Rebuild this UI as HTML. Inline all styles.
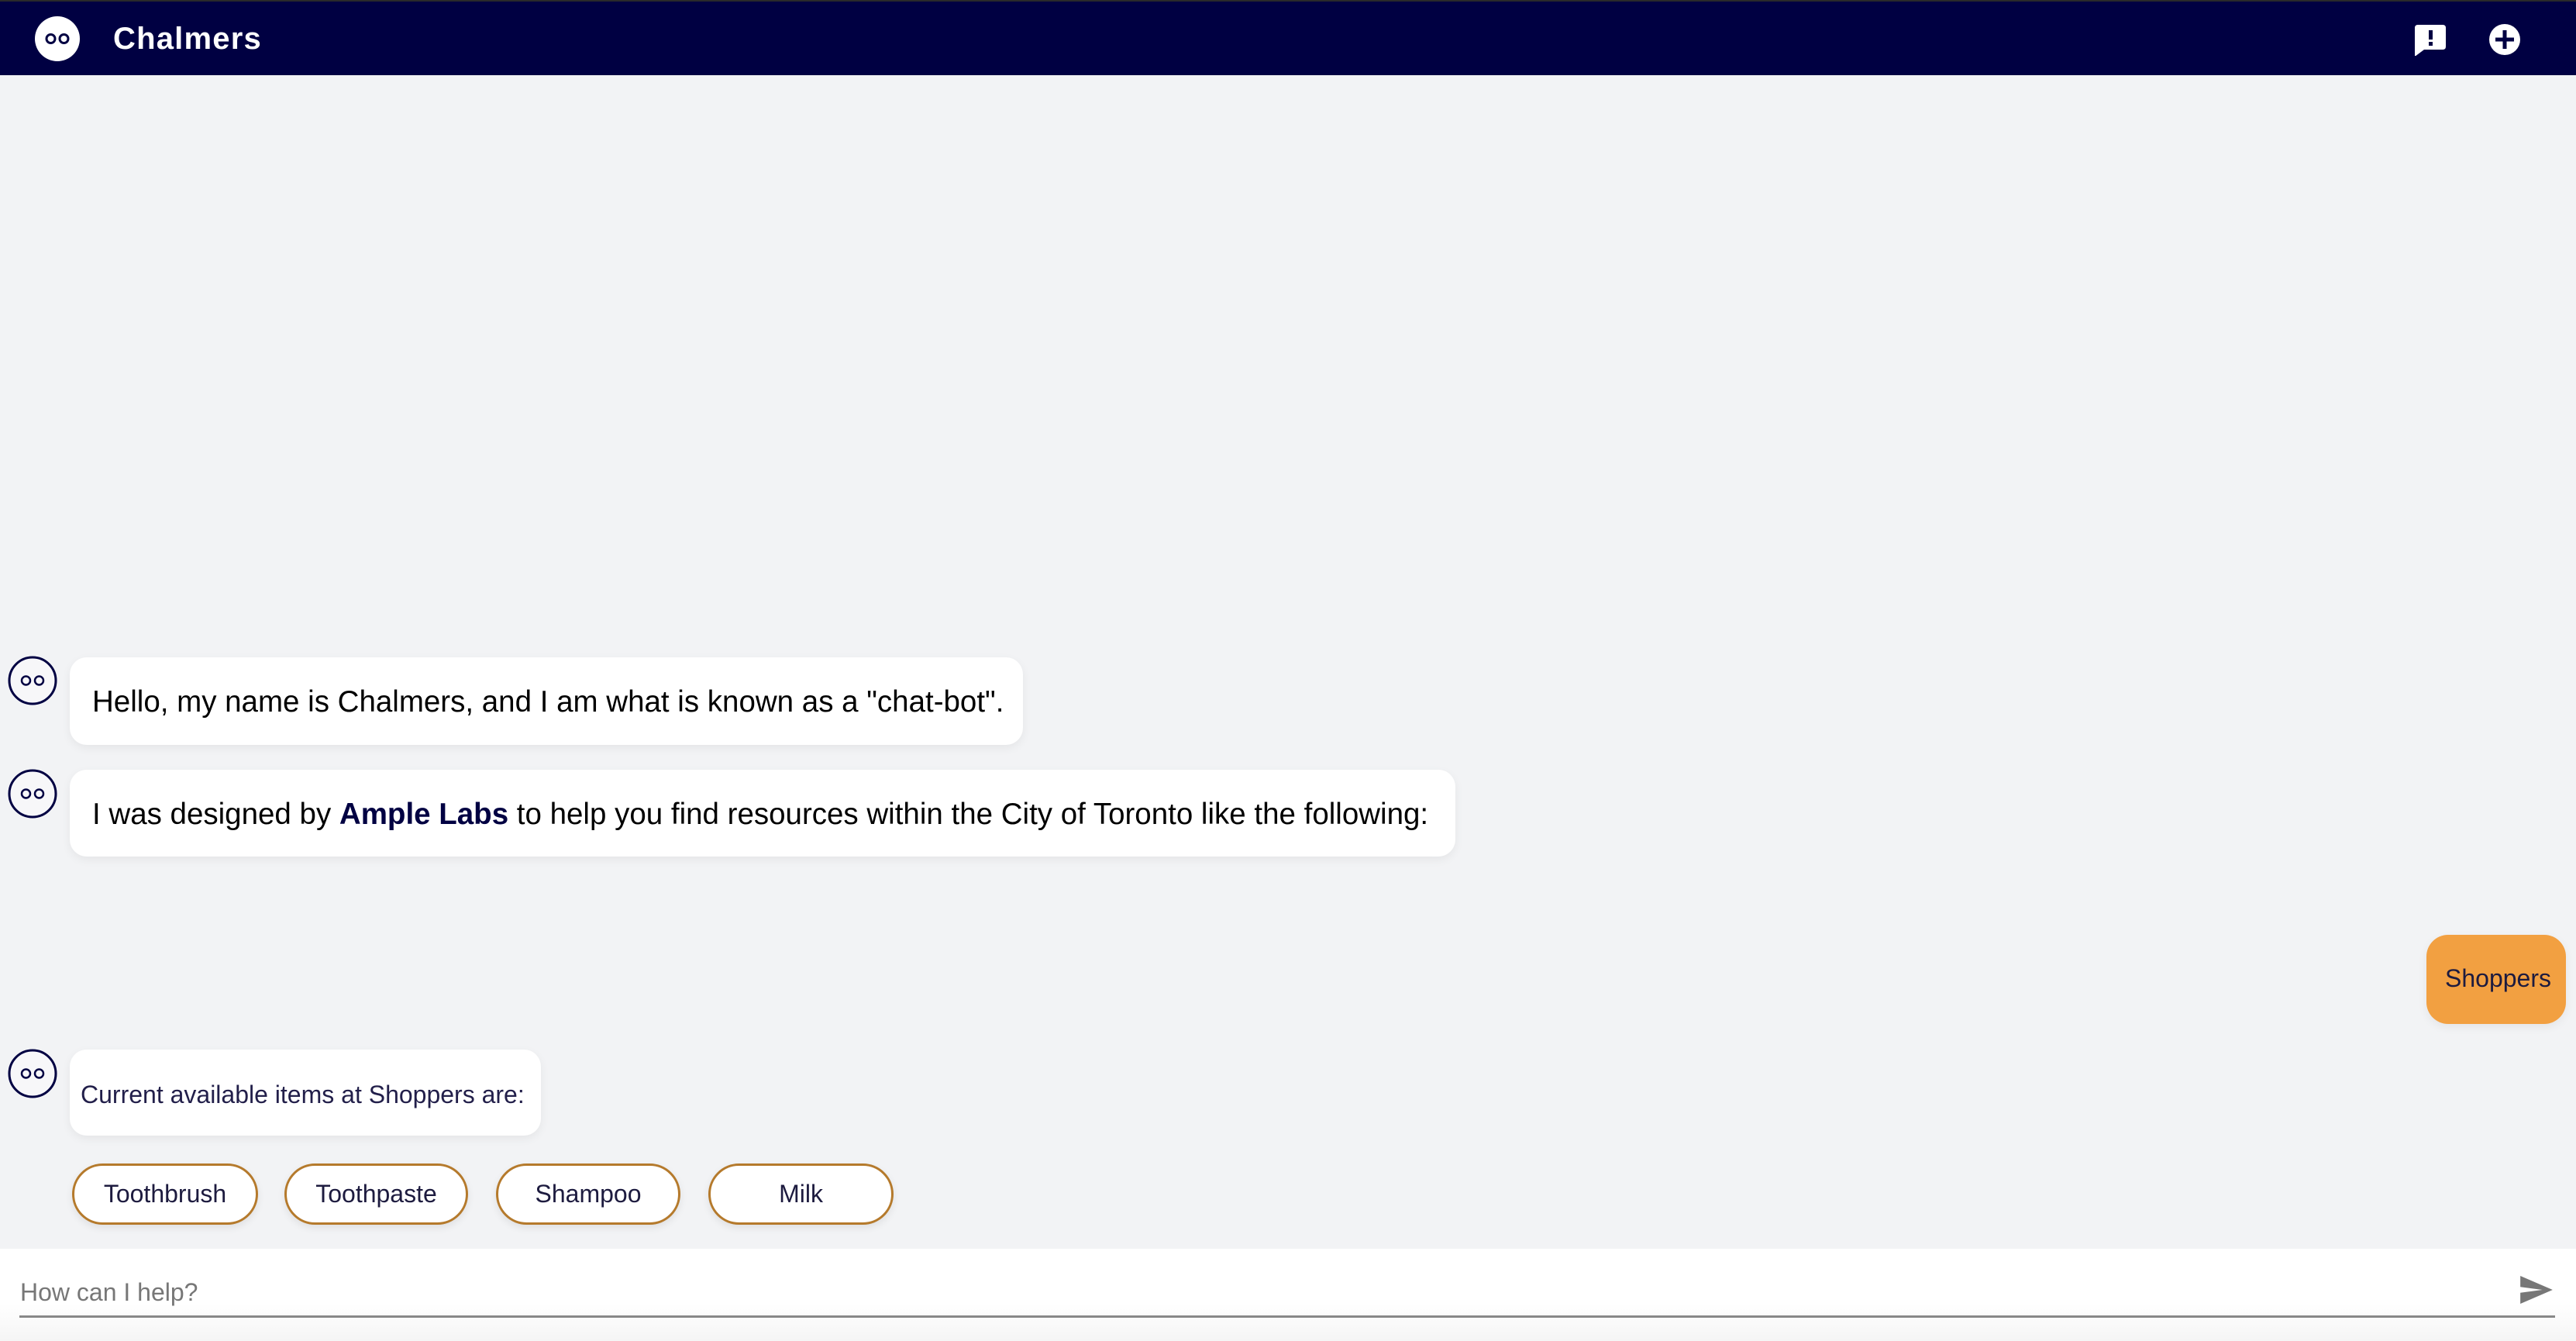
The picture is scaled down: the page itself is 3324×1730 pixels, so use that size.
<!DOCTYPE html>
<html><head><meta charset="utf-8"><style>
*{margin:0;padding:0;box-sizing:border-box}
body{width:3324px;height:1730px;background:#f2f3f5;position:relative;overflow:hidden;font-family:"Liberation Sans",sans-serif}
.hdr{position:absolute;left:0;top:0;width:3324px;height:97px;background:#000042;border-top:2px solid #2a2a2a}
.title{position:absolute;left:146px;top:26px;color:#fff;font-weight:bold;font-size:40px;letter-spacing:1.2px}
.b{position:absolute;background:#fff;border-radius:22px;box-shadow:0 4px 12px rgba(0,0,0,.06);color:#000;font-size:38.5px;white-space:nowrap}
.chip{position:absolute;top:1501px;height:79px;border:3px solid #b57a2c;border-radius:40px;background:#fff;color:#1d1b3f;font-size:32px;text-align:center;line-height:72px;box-shadow:0 4px 10px rgba(0,0,0,.08)}
</style></head><body>
<div class="hdr">
<svg style="position:absolute;left:44px;top:18px" width="60" height="60" viewBox="0 0 60 60"><circle cx="30" cy="30" r="29" fill="#fff"/><circle cx="21.5" cy="30" r="5.5" fill="none" stroke="#000042" stroke-width="3"/><circle cx="38.5" cy="30" r="5.5" fill="none" stroke="#000042" stroke-width="3"/></svg>
<div class="title">Chalmers</div>
<svg style="position:absolute;left:3116px;top:28px" width="42" height="42" viewBox="0 0 42 42"><path d="M4 2H36Q40 2 40 6V30Q40 34 36 34H12L0 43V6Q0 2 4 2Z" fill="#fff"/><rect x="18" y="9" width="5" height="12" fill="#000042"/><rect x="18" y="24" width="5" height="5" fill="#000042"/></svg>
<svg style="position:absolute;left:3211px;top:28px" width="42" height="42" viewBox="0 0 42 42"><circle cx="21" cy="21" r="20" fill="#fff"/><rect x="18.5" y="9" width="5" height="24" fill="#000042"/><rect x="9" y="18.5" width="24" height="5" fill="#000042"/></svg>
</div>

<svg style="position:absolute;left:10px;top:846px" width="64" height="64" viewBox="0 0 64 64"><circle cx="32" cy="32" r="30" fill="#f7f7f9" stroke="#000042" stroke-width="3"/><circle cx="23.5" cy="32" r="5.5" fill="none" stroke="#000042" stroke-width="2.5"/><circle cx="40.5" cy="32" r="5.5" fill="none" stroke="#000042" stroke-width="2.5"/></svg>
<div class="b" style="left:90px;top:848px;width:1230px;height:113px;padding:36px 0 0 29px">Hello, my name is Chalmers, and I am what is known as a "chat-bot".</div>

<svg style="position:absolute;left:10px;top:992px" width="64" height="64" viewBox="0 0 64 64"><circle cx="32" cy="32" r="30" fill="#f7f7f9" stroke="#000042" stroke-width="3"/><circle cx="23.5" cy="32" r="5.5" fill="none" stroke="#000042" stroke-width="2.5"/><circle cx="40.5" cy="32" r="5.5" fill="none" stroke="#000042" stroke-width="2.5"/></svg>
<div class="b" style="left:90px;top:993px;width:1788px;height:112px;padding:36px 0 0 29px">I was designed by <b style="color:#000042">Ample Labs</b> to help you find resources within the City of Toronto like the following:</div>

<div class="b" style="left:3131px;top:1206px;width:180px;height:115px;background:#f2a041;color:#1d1b3f;font-size:32px;padding:38px 0 0 24px;border-radius:28px">Shoppers</div>

<svg style="position:absolute;left:10px;top:1353px" width="64" height="64" viewBox="0 0 64 64"><circle cx="32" cy="32" r="30" fill="#f7f7f9" stroke="#000042" stroke-width="3"/><circle cx="23.5" cy="32" r="5.5" fill="none" stroke="#000042" stroke-width="2.5"/><circle cx="40.5" cy="32" r="5.5" fill="none" stroke="#000042" stroke-width="2.5"/></svg>
<div class="b" style="left:90px;top:1354px;width:608px;height:111px;color:#221f4a;font-size:32px;padding:40px 0 0 14px">Current available items at Shoppers are:</div>

<div class="chip" style="left:93px;width:240px">Toothbrush</div>
<div class="chip" style="left:367px;width:237px">Toothpaste</div>
<div class="chip" style="left:640px;width:238px">Shampoo</div>
<div class="chip" style="left:914px;width:239px">Milk</div>

<div style="position:absolute;left:0;top:1611px;width:3324px;height:119px;background:linear-gradient(#fff,#fff 60%,#f5f5f5)"></div>
<div style="position:absolute;left:26px;top:1649px;color:#777;font-size:32px">How can I help?</div>
<div style="position:absolute;left:25px;top:1697px;width:3272px;height:3px;background:#888"></div>
<svg style="position:absolute;left:3251px;top:1646px" width="44" height="36" viewBox="0 0 44 38"><path d="M0 0L44 19L0 38L0 23L30 19L0 15Z" fill="#777"/></svg>
</body></html>
